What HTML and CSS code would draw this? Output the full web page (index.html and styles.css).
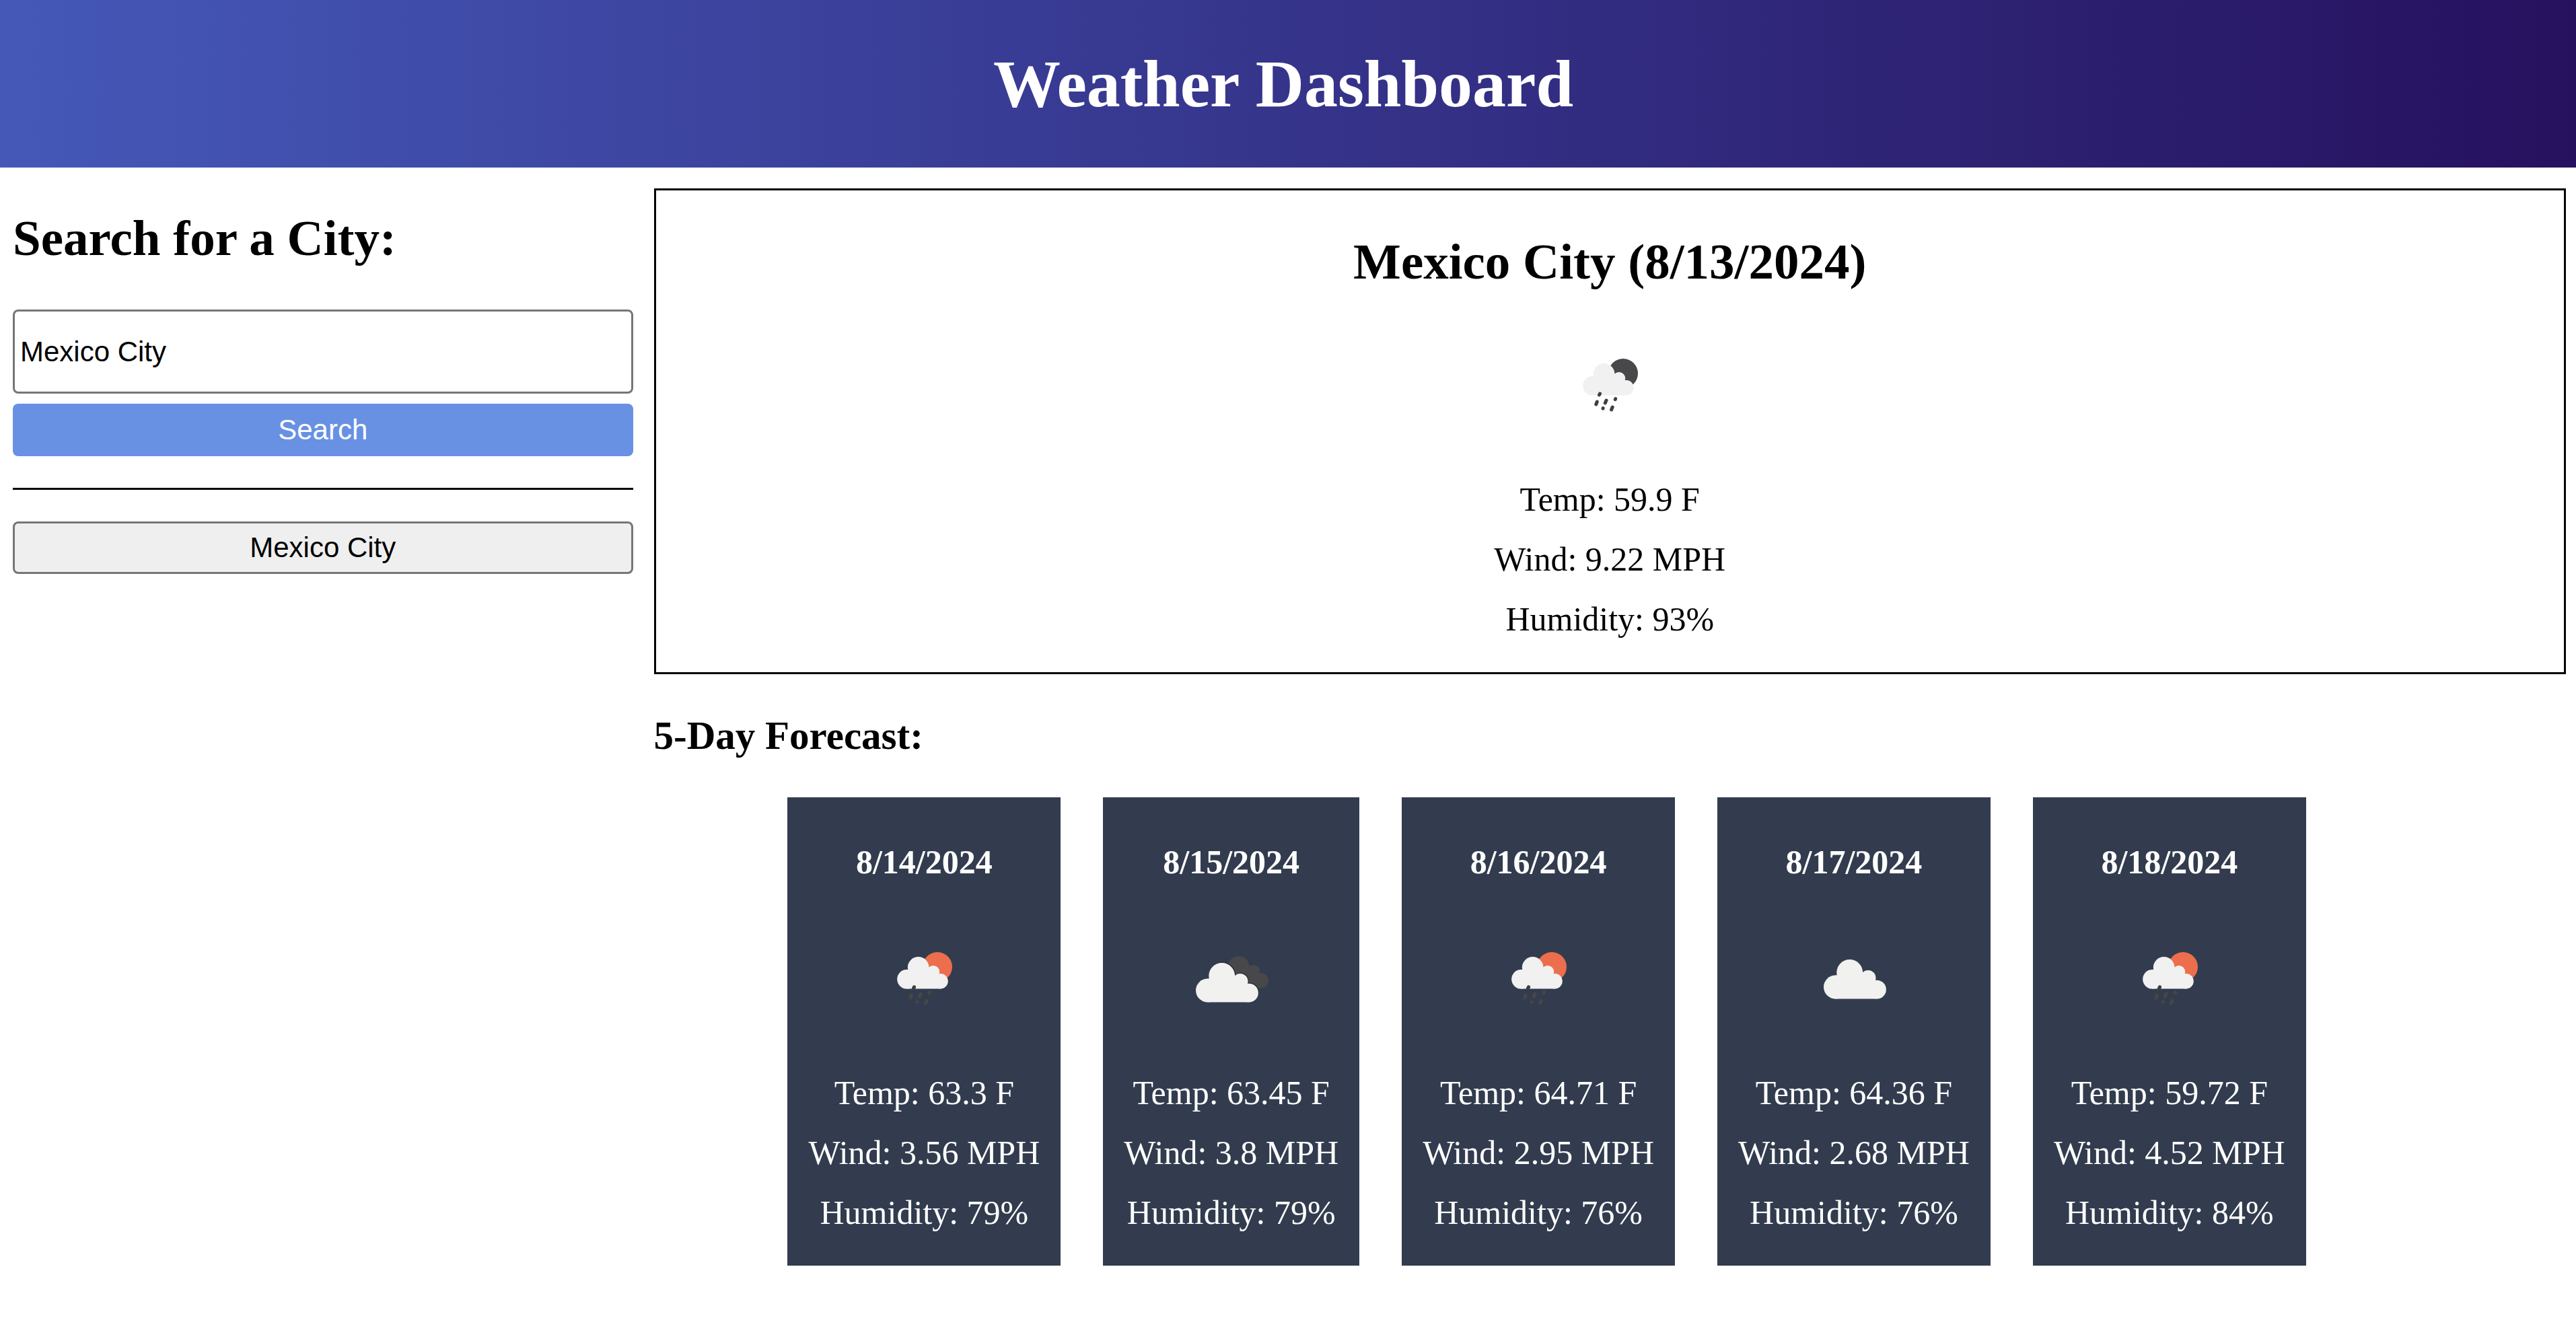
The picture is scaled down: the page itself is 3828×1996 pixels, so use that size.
FILE: index.html
```html
<!DOCTYPE html>
<html lang="en">
<head>
<meta charset="UTF-8">
<meta name="viewport" content="width=device-width, initial-scale=1">
<title>Weather Dashboard</title>
<link rel="stylesheet" href="styles.css">
</head>
<body>
<svg class="sprite" aria-hidden="true">
  <symbol id="cloud" viewBox="0 0 93 59">
    <circle cx="17.500" cy="41" r="17.500"/>
    <circle cx="38.700" cy="19.500" r="19.400"/>
    <circle cx="66" cy="27.500" r="11.500"/>
    <circle cx="79" cy="44.700" r="13.900"/>
    <path d="M17 58.500V23.500H20L58 19L77 31L79 58.500Z"/>
  </symbol>
  <symbol id="drops" viewBox="0 0 36 30">
    <path d="M8.500 3L7.500 5M4.300 15L2.800 19M18 13L16.300 17M31.700 10.500L31.300 11.600M13.200 24.600L13 25.200M27.200 23L25.600 27"/>
  </symbol>
  <symbol id="rain-night" viewBox="0 0 156 156">
    <circle cx="98" cy="60" r="22" fill="#48484a"/>
    <use href="#cloud" x="38" y="45" width="76" height="48" fill="#f1f1f1"/>
    <use class="drops" href="#drops" x="55" y="87" width="36" height="30"/>
  </symbol>
  <symbol id="rain-day" viewBox="0 0 156 156">
    <circle cx="98" cy="60" r="22" fill="#ec6e4c"/>
    <use href="#cloud" x="38" y="45" width="76" height="48" fill="#f1f1f2"/>
    <use class="drops-faint" href="#drops" x="55" y="87" width="36" height="30"/>
    <path class="drops" d="M63.500 90L62.500 92"/>
  </symbol>
  <symbol id="broken" viewBox="0 0 156 156">
    <use href="#cloud" x="57" y="44" width="76" height="48" fill="#48484a"/>
    <use href="#cloud" x="26" y="53" width="93" height="59" fill="#2a2a2c"/>
    <use href="#cloud" x="25" y="54" width="93" height="59" fill="#f1f1ef"/>
  </symbol>
  <symbol id="cloudy" viewBox="0 0 156 156">
    <use href="#cloud" x="33" y="49" width="93" height="59" fill="#f1f1ef"/>
  </symbol>
</svg>

<header class="header">
  <h1>Weather Dashboard</h1>
</header>

<div class="layout">
  <aside class="sidebar">
    <form class="search">
      <h2><label for="city">Search for a City:</label></h2>
      <input id="city" class="search-input" type="text" value="Mexico City">
      <button class="button button-search" type="button">Search</button>
    </form>
    <hr>
    <button class="button" type="button">Mexico City</button>
  </aside>

  <main class="weather">
    <section class="current">
      <h2>Mexico City (8/13/2024)</h2>
      <svg class="icon" role="img" aria-label="Rain"><use href="#rain-night"/></svg>
      <div class="stats"><p>Temp: 59.9 F</p><p>Wind: 9.22 MPH</p><p>Humidity: 93%</p></div>
    </section>
    <h3>5-Day Forecast:</h3>
    <section class="forecast">
      <article class="card">
        <h4>8/14/2024</h4>
        <svg class="icon" role="img" aria-label="Rain"><use href="#rain-day"/></svg>
        <div class="stats"><p>Temp: 63.3 F</p><p>Wind: 3.56 MPH</p><p>Humidity: 79%</p></div>
      </article>
      <article class="card">
        <h4>8/15/2024</h4>
        <svg class="icon" role="img" aria-label="Broken clouds"><use href="#broken"/></svg>
        <div class="stats"><p>Temp: 63.45 F</p><p>Wind: 3.8 MPH</p><p>Humidity: 79%</p></div>
      </article>
      <article class="card">
        <h4>8/16/2024</h4>
        <svg class="icon" role="img" aria-label="Rain"><use href="#rain-day"/></svg>
        <div class="stats"><p>Temp: 64.71 F</p><p>Wind: 2.95 MPH</p><p>Humidity: 76%</p></div>
      </article>
      <article class="card">
        <h4>8/17/2024</h4>
        <svg class="icon" role="img" aria-label="Clouds"><use href="#cloudy"/></svg>
        <div class="stats"><p>Temp: 64.36 F</p><p>Wind: 2.68 MPH</p><p>Humidity: 76%</p></div>
      </article>
      <article class="card">
        <h4>8/18/2024</h4>
        <svg class="icon" role="img" aria-label="Rain"><use href="#rain-day"/></svg>
        <div class="stats"><p>Temp: 59.72 F</p><p>Wind: 4.52 MPH</p><p>Humidity: 84%</p></div>
      </article>
    </section>
  </main>
</div>
</body>
</html>
```

FILE: styles.css
```css
* { box-sizing: border-box; margin: 0; }

body {
  background: #fff;
  color: #000;
  font-family: "Liberation Serif", "Times New Roman", serif;
  font-size: 50px;
  line-height: 58px;
}

.sprite { display: none; }

.header {
  padding: 67px 14px 67px 0;
  background: linear-gradient(90deg, #4558b8, #26115e);
  color: #fff;
  text-align: center;
}

h1 { font-size: 100px; line-height: 115px; }
h2 { font-size: 75px; line-height: 86px; }
h3 { margin: 58px 0; font-size: 59px; line-height: 67px; }
h4 { font-size: 50px; line-height: 58px; }

.layout {
  display: grid;
  grid-template-columns: 12fr 37fr;
  gap: 31px;
  padding: 31px 15px 31px 19px;
}

.sidebar { padding-top: 31px; }

.search { display: flex; flex-direction: column; }

.search-input {
  height: 125px;
  margin: 63px 0 15px;
  padding: 0 8px;
  border: 3px solid #767676;
  border-radius: 8px;
  background: #fff;
  color: #000;
  font: 42px "Liberation Sans", Arial, sans-serif;
}

.button {
  width: 100%;
  height: 78px;
  border: 3px solid #767676;
  border-radius: 8px;
  background: #efefef;
  color: #000;
  font: 42px "Liberation Sans", Arial, sans-serif;
}

.button-search { border: 0; background: #6891e3; color: #fff; }

hr { margin: 47px 0; border: 0; border-top: 3px solid #000; }

.current {
  padding: 63px 31px 50px;
  border: 3px solid #000;
  text-align: center;
}

.current .icon { margin-top: 63px; }

.icon {
  display: block;
  width: 156px;
  height: 156px;
  margin: 67px auto 62px;
}

.drops,
.drops-faint {
  fill: none;
  stroke: #484644;
  stroke-width: 5px;
  stroke-linecap: round;
}

.drops { stroke: #3f3f41; }

.stats { display: grid; gap: 31px; }

.forecast {
  display: flex;
  gap: 63px;
  padding-left: 7%;
}

.card {
  padding: 67px 31px 50px;
  background: #323c4e;
  color: #fff;
  text-align: center;
  white-space: nowrap;
}
```
